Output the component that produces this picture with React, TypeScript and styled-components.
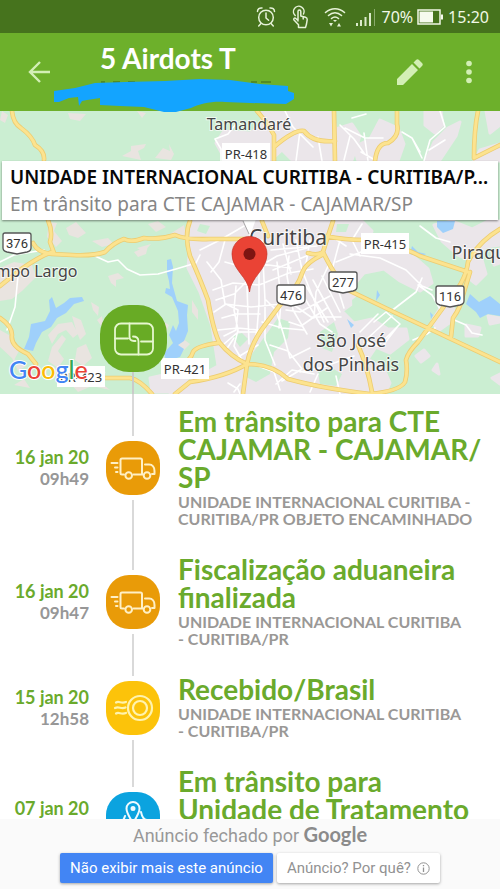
import React from "react";
import styled, { createGlobalStyle } from "styled-components";

const GlobalStyle = createGlobalStyle`
  *, *::before, *::after { box-sizing: border-box; }
  body { margin: 0; background: #fff; }
  h1, h2, p, ol { margin: 0; padding: 0; }
  button { border: 0; padding: 0; background: none; font: inherit; color: inherit; cursor: pointer; }
`;

const brandFont = `Lato, "Open Sans", sans-serif`;
const systemFont = `"Noto Sans", "Open Sans", sans-serif`;

const Page = styled.div`
  display: flex;
  flex-direction: column;
  height: 100vh;
  overflow: hidden;
  background: #fff;
  font-family: ${brandFont};
`;

const StatusBar = styled.div`
  flex: none;
  display: flex;
  align-items: center;
  justify-content: flex-end;
  height: 33px;
  padding-right: 11px;
  background: #46731d;
  color: #f1f8e6;
  font: 16px/32px ${systemFont};
  svg { display: block; flex: none; }
`;

const StatusIcons = styled.div`
  display: flex;
  align-items: center;
  gap: 15px;
  margin-right: 6px;
`;

const Battery = styled.div`
  display: flex;
  margin: 0 5px 0 4px;
`;

const AppBar = styled.header`
  flex: none;
  position: relative;
  z-index: 2;
  display: flex;
  align-items: center;
  height: 78px;
  padding: 0 16px 0 24px;
  background: #6db02b;
  color: #dcf0c6;
`;

const BarButton = styled.button`
  display: flex;
  align-items: center;
  justify-content: center;
  width: 30px;
  height: 40px;
`;

const BarTitle = styled.div`
  flex: 1;
  align-self: flex-start;
  padding: 10px 0 0 46px;
`;

const Heading = styled.h1`
  color: #fff;
  font-size: 28px;
  font-weight: 700;
  line-height: 30px;
`;

const BarActions = styled.div`
  display: flex;
  gap: 29px;
`;

const Scribble = styled.svg`
  position: absolute;
  left: 54px;
  top: 45px;
`;

const MapPanel = styled.section`
  flex: none;
  position: relative;
  height: 283px;
  background: #cbeed2;
`;

const MapDrawing = styled.svg`
  display: block;
  width: 100%;
  height: 100%;
`;

const InfoWindow = styled.div`
  position: absolute;
  top: 50px;
  left: 2px;
  right: 2px;
  padding: 3px 8px 2px;
  background: #fff;
  box-shadow: 0 1px 2px rgba(0, 0, 0, 0.45);
  font-family: ${systemFont};
  white-space: nowrap;
`;

const InfoTitle = styled.h2`
  color: #080808;
  font-size: 19px;
  font-weight: 600;
  line-height: 27px;
`;

const InfoText = styled.p`
  color: #858585;
  font-size: 19px;
  line-height: 27px;
`;

const MapToggle = styled.button`
  position: absolute;
  left: 100px;
  bottom: 22px;
  display: flex;
  align-items: center;
  justify-content: center;
  width: 67px;
  height: 67px;
  border-radius: 29px;
  background: #68ab25;
`;

const ToggleStem = styled.div`
  position: absolute;
  left: 132px;
  bottom: 0;
  width: 2px;
  height: 22px;
  background: #c9cbc9;
`;

const Timeline = styled.ol`
  flex: 1 1 0;
  min-height: 0;
  overflow: hidden;
  list-style: none;
`;

const Row = styled.li<{ $tall?: boolean }>`
  display: grid;
  grid-template-columns: 89px 88px 1fr;
  min-height: ${(p) => (p.$tall ? 130 : 92)}px;
`;

const When = styled.div`
  align-self: center;
  min-height: 42px;
  text-align: right;
  font-size: 17px;
  font-weight: 700;
  line-height: 21px;
  color: #979797;
`;

const Day = styled.div`
  color: #6aaa2c;
  font-size: 18px;
`;

const Track = styled.div`
  display: flex;
  flex-direction: column;
  align-items: center;
  gap: 5px;
`;

const Stem = styled.div`
  flex: 1;
  width: 2px;
  background: #d9d9d9;
`;

const Marker = styled.div<{ $color: string }>`
  flex: none;
  display: flex;
  align-items: center;
  justify-content: center;
  width: 54px;
  height: 54px;
  border-radius: 23px;
  background: ${(p) => p.$color};
`;

const Details = styled.div`
  padding: 13px 16px 15px 1px;
`;

const EventTitle = styled.h2`
  color: #6aaa2c;
  font-size: 28px;
  font-weight: 700;
  line-height: 28px;
`;

const EventText = styled.p`
  padding-top: 2px;
  color: #9a9896;
  font-size: 16px;
  font-weight: 700;
  line-height: 17px;
`;

const AdBar = styled.footer`
  flex: none;
  padding-bottom: 6px;
  background: #fafafa;
  font-family: Roboto, sans-serif;
`;

const AdCaption = styled.p`
  color: #989898;
  font-size: 18px;
  line-height: 31px;
  text-align: center;
`;

const AdBrand = styled.span`
  color: #8b8b8b;
  font-family: ${brandFont};
  font-size: 20px;
  font-weight: 700;
`;

const AdButtons = styled.div`
  display: flex;
  justify-content: center;
  gap: 4px;
  padding-top: 2px;
`;

const AdButton = styled.button<{ $primary?: boolean }>`
  display: flex;
  align-items: center;
  gap: 6px;
  height: 30px;
  padding: 0 10px;
  border-radius: 2px;
  background: ${(p) => (p.$primary ? "#4285f4" : "#fff")};
  color: ${(p) => (p.$primary ? "#fff" : "#929292")};
  font-size: 15px;
  box-shadow: 0 1px 3px rgba(0, 0, 0, 0.35);
  white-space: nowrap;
`;

const line = { fill: "none", strokeLinecap: "round", strokeLinejoin: "round" } as const;

const AlarmIcon = () => (
  <svg width="20" height="22" viewBox="0 0 20 22" stroke="#e6f2d8" strokeWidth="1.5" {...line}>
    <circle cx="10" cy="11.5" r="7.3" />
    <path d="M10 7v5l2.6 2.2M1.5 5.5C1.5 3 3.5 1.7 6 2M18.5 5.5C18.5 3 16.5 1.7 14 2M5 17.500l-2.300 2.500M15 17.500l2.300 2.500" />
  </svg>
);

const TouchIcon = () => (
  <svg width="18" height="24" viewBox="0 0 18 24" stroke="#e6f2d8" strokeWidth="1.5" {...line}>
    <path d="M4.200 10.500A5.300 5.300 0 1 1 12.500 9" />
    <path d="M7 16V6.500a1.400 1.400 0 0 1 2.800 0V11l4.700 1.300c1.300.4 1.800 1 1.700 2.300l-.7 4.400-1 3.500H7.500v-2.700L3 15c-1-1.600.7-2.500 1.800-1.500L7 15.500M12.200 12v2" />
  </svg>
);

const WifiIcon = () => (
  <svg width="22" height="22" viewBox="0 0 22 22" stroke="#e6f2d8" strokeWidth="1.6" {...line}>
    <path d="M1.500 6.500c5.500-5 13.500-5 19 0M4.500 9.500c4-3.500 9-3.500 13 0M7.500 12.500c2.200-1.900 4.800-1.900 7 0" />
    <path d="M9 14h4l-2 2zM5 17h4l-2 3.500zM13 20.500h4L15 17z" fill="#e6f2d8" stroke="none" />
  </svg>
);

const SignalIcon = () => (
  <svg width="20" height="18" viewBox="0 0 20 18" fill="#dcebcb">
    <path d="M0 15h2v3H0zM4 12h2v6H4zM8.500 9h2v9h-2zM13 5h2v13h-2z" />
    <path d="M18 1h1v17h-1z" opacity=".45" />
  </svg>
);

const BatteryIcon = () => (
  <svg width="26" height="16" viewBox="0 0 26 16">
    <path d="M1 1h22v14H1z" fill="none" stroke="#f1f8e6" strokeWidth="1.5" />
    <path d="M2.500 2.500H16v11H2.500zM24 5.500h2v5h-2z" fill="#f6faee" />
  </svg>
);

const TruckIcon = () => (
  <svg width="46" height="26" viewBox="0 0 46 26" stroke="#fff0c5" strokeWidth="2" {...line}>
    <path d="M14 19.500h-2a1.500 1.500 0 0 1-1.500-1.500V5A1.500 1.500 0 0 1 12 3.500h18.500A1.500 1.500 0 0 1 32 5v14.500H23.500M35 9.500h4c3.500 0 5.500 3 5.500 6.500v3h-2.500M32 19.500h1" />
    <circle cx="18.700" cy="20.500" r="3.300" />
    <circle cx="37" cy="20.500" r="3.300" />
    <path d="M1.500 8h6M5 12.500h2.500M6 17h1.500" />
  </svg>
);

const StampIcon = () => (
  <svg width="42" height="28" viewBox="0 0 42 28" stroke="#fff3ae" strokeWidth="2.2" {...line}>
    <circle cx="28" cy="14" r="12" />
    <circle cx="28" cy="14" r="7" />
    <path d="M4 8.500c3-2 5 1.500 10-.5M3 14c4-2 6 1.500 10.500-.5M4 19.500c3-2 5 1.500 10-.5" />
  </svg>
);

const PlaceIcon = () => (
  <svg width="32" height="38" viewBox="0 0 32 38" stroke="#eefaff" strokeWidth="2" {...line}>
    <path d="M16 23C13 18 9.500 13 9.500 8.500a6.500 6.500 0 0 1 13 0C22.500 13 19 18 16 23z" />
    <circle cx="16" cy="8.500" r="1.500" fill="#eefaff" />
    <path d="M8 16c-1 3-2 6-6 8v9l9-4 10 4 9-4v-9c-3 0-5-3-6-8" />
  </svg>
);

const FoldedMapIcon = () => (
  <svg width="40" height="34" viewBox="0 0 40 34" stroke="#e6f7cf" strokeWidth="1.8" {...line}>
    <rect x="1" y="1.500" width="38" height="31" rx="6" />
    <path d="M15.500 1.500v13q0 4.500 4.500 4.500h1.500M1 16.500h13M19 14.500q5.500 0 5.500 5v13M27 19.500h12" />
  </svg>
);

const InfoIcon = () => (
  <svg width="13" height="13" viewBox="0 0 13 13" stroke="#929292" fill="none">
    <circle cx="6.500" cy="6.500" r="5.700" />
    <path d="M6.500 5.500V10M6.500 3v1.200" strokeWidth="1.3" />
  </svg>
);

const suburbs = [
  "M0 268l14-6 18 3 4 12-14 14-10 8-12 2zM68 113l18 1-6 7-10-2zM2 111l6 4-3 8-5-3z",
  "M122 156l9-5 0-5 15-2-2 4-6 3 3 9zM155 158l8-10 7 3-1-7 5 10-3 6zM137 111l9 2-4 5z",
  "M66 228l10-6 10 11-8 5-9-3zM92 241l16-3 6 6-12 3zM134 252l14-6-2 8-8 3z",
  "M49 222l8 1-3 8 8 10-6 6-9-10zM148 224l10-3 8 6-10 5zM170 234l8 4 8-3-2-10z",
  "M108 276l10-3 6 5-8 2 0 7-5-4zM137 248l14-4-7 8z",
  "M48 335l10-11 14-2 6 12-5 4-7-8-8 4-6 10zM62 335l4 4-8 12 6 8-6 9-10-7 4-14z",
  "M77 348l9-4 6 14-9 8-8-6zM91 302l8 5-1 9-5-6zM0 330l9 5 10 16-5 9-14-13z",
  "M72 316l9 4 5 14-6 6-4-10zM97 320l5-4 2 14zM60 372l14-6 18 8 14-2-6 10 10 8-18-4-14 6zM12 358l14 8-8 5zM14 385l10-6 6 9z",
  "M172 348l10-10 8 6-8 8zM164 322l5 3-3 8zM192 300l6 10 0 10-6-8z",
];

const urban = [
  "M262 111h70l4 18 16-5 8 12-8 24h-60l-10-10-12 11h-44l-10-18 8-12 26 2 12-8z",
  "M380 120l18 8 6 16-6 17h-40l-4-14 16-8zM425 111l16 0 2 14-8 8-10-8zM486 111h14v14l-10 8z",
  "M448 128l12-6-4 14-16 24h-14l8-18zM480 150l20-6v17h-26z",
  "M192 221h170l10 10-4 14 22 8 22 2 16 14 4 14-12 8-20-10-16-12-20 4-12 14 4 14-14 10 12 12 18-4 16 10 18 0 2 10-18 14-14-6-8 12 16 10 6 14-6 13H168l24-16 26-14-6-40-12-34-12-24z",
  "M150 378l18-4 20 4-10 14h-26zM434 225l18-4 20 8 16-8h12v24l-14 2-14 14-14-6-16-14z",
  "M468 262l14-2 4 14-10 10-10-8zM442 305l12 4-2 12-14 10-6-10zM492 252l8-3v14l-6 2zM466 325l14 3-2 8-12 0zM416 356l8-6 5 6-8 6zM433 370l4-6 2 10z",
  "M488 316l12 2v4l-10 2zM492 378l8-4v10z",
];

const parks = [
  "M284 178l14-10 8 17-8 14zM337 224l12 0-3 8-10 0zM405 300l12 6-4 16-10-4z",
  "M268 332l10-14 12 4-2 16-14 14-4 22-14 8-12-6 8-22zM352 300l10-8 3 14-12 10zM232 336l10-3 6 6-8 8z",
  "M320 332l14-10 4 12-6 18-10-4zM370 276l14-1 8 8 20 6-5 12-16 4-16-6-12-12z",
  "M200 224l10 2-4 8-9-3zM372 242l10 2-4 7zM318 372l14-4 10 6-6 12-16-2z",
];

const streets = [
  "M95 256l13 6 10-2 9 9 13 6 18-1 18-5 20-6 4-8M0 262l14-7 30-5M7 330l8-23 3-31",
  "M207 262l14 18 4 24 26 3 40-4 20 14 30 0M213 290l20-7 26 2 30-12 24-4M225 240l-6 22-8 10",
  "M200 250l20-10 24-14M259 240l0 64-2 26-4 20M262 240l3 60 0 40 10 25M225 262l18 5 18-3 30 4",
  "M216 300l18-6 14-14M214 312l12-8 12 6-2 20-12 6M222 318l14-4 24 0M218 330l20-2 20 2M224 344l14-12 22 0",
  "M236 286l-2 24 4 20-4 16 8 14M247 286l2 58M258 345l-20 12M226 350l8-12",
  "M277 262l4 38-2 28M289 256l-2 20 6 34 14 24M267 262l10-6 30-8 16-14M273 270l38-16M271 250l46-4",
  "M283 244l8 30M296 240l6 30 12 30 10 22M310 240l-4 24M330 262l-14 30-2 26M340 240l-8 30 12 38",
  "M300 290l20 34 12 8M306 286l22 36M313 280l22 40M322 276l18 36M330 296l-30 16-14-2M327 308l-26 18-12-4",
  "M266 300l10 10 8 26 6 22M262 322l20 6 22 2M270 345l18 6 14 18-20 12M258 366l16 6 6 18M290 358l20-10",
  "M336 262l30-12 10-4M350 254l30 4 26 12 16 16 10 4M346 246l-12-8M362 224l-10 16 8 16",
  "M374 322l12-10 14 12-22 22-14-4M360 332l18-18M368 338l24-22M384 344l14-18M390 312l26-20 6-14",
  "M418 285l14 10 8 14M413 340l14-6 8-6M452 319l14 6 6 8 10 2M490 235l-14 13M420 226l16 12 14 4",
  "M300 372l20-4 34-12M276 384l16-14 22 4M310 392l8-18M340 394l-4-18",
  "M215 139l13-5 8-10M215 139l6 10 0 12M285 111l8 16 20 20M300 131l-4 30M318 137l4 24M340 125l14 14 10 14",
  "M345 128l20 10 18 0M350 136l-6 24M364 133l4 28M352 118l14-4M440 111l5 16-15 13-6 21M402 132l10 6 8 14M445 140l-16 10M422 158l-10-20M375 160l-14-8",
  "M228 383l10 6 2 5M234 392l6-8",
];

const highways = [
  "M12 111Q13 123 21 128Q32 136 35 145Q45 151 44 160M48 220Q53 232 50 242L54 253",
  "M33 243Q38 253 52 254L72 255Q95 256 105 252Q113 243 124 239Q131 243 144 238Q160 240 175 235Q186 240 210 239H245",
  "M52 252Q40 256 20 270L0 286",
  "M190 221Q184 235 190 256Q201 281 208 300Q213 329 219 342Q231 357 247 364Q272 364 288 379Q320 388 370 394Q400 391 405 382Q408 372 406 360Q408 352 418 342L445 305Q466 282 468 262Q478 242 500 229",
  "M247 364Q225 377 190 382L175 394M218 343Q196 346 193 352Q191 360 180 366M247 364L243 394",
  "M247 364Q251 343 265 325L280 305Q297 290 303 271Q306 263 322 255",
  "M0 318Q12 326 12 335Q10 346 28 354L36 364M95 378H130Q140 380 152 394",
  "M308 253Q318 256 323 252Q337 281 350 291Q375 303 400 315Q440 334 500 362",
  "M325 236Q345 240 365 240Q400 245 420 256L468 272",
  "M274 161V135Q267 122 257 111M274 147Q295 129 304 131Q313 143 335 141M334 111L335 161",
  "M397 111V124Q400 136 388 143Q377 143 375 161M478 111Q474 130 474 158M474 158L500 145",
  "M470 272L463 295Q461 307 453 318L451 337M333 221L328 236L323 252M262 221L268 236",
  "M358 345Q367 365 372 392",
];

const waters = [
  "M24 349l5-12 2-13 14-3 5-10-1-11 3-3 4 11 8-5 6-5 12-1 2 4-10 3-8 9-9 5-6 9-9 5-6 11-3 8z",
  "M167 260l4-1 2 8-1 16 5 18 11 4-1 10 1 16-4 10-6 4 6 4-4 8-14 4-2-8 9-10-4-8 4-10 3 6 3-8-1-12-6-14-7-4 1-5 4 1-1-8-2-8z",
  "M437 221h18l-2 8-10 4-6-6zM466 304l4-10 9 8 11-6 10 8v12l-12-2-8 4-4-6z",
  "M377 290l3 5-4 6zM347 319l7 6-3 3zM412 246l6 6 8 2-6 3-10-3zM430 312l3 3-2 4z",
];

const shields = [
  { x: 17, y: 243, label: "376" },
  { x: 291, y: 295, label: "476" },
  { x: 343, y: 282, label: "277" },
  { x: 450, y: 296, label: "116" },
];

const tags = [
  { x: 246, y: 154, label: "PR-418" },
  { x: 385, y: 244, label: "PR-415" },
  { x: 185, y: 369, label: "PR-421" },
  { x: 81, y: 377, label: "PR-423" },
];

const towns = [
  { x: 249, y: 130, size: 16, label: "Tamandaré" },
  { x: 288, y: 245, size: 21, label: "Curitiba" },
  { x: 32, y: 277, size: 16, label: "ampo Largo" },
  { x: 484, y: 259, size: 18, label: "Piraqua" },
  { x: 351, y: 347, size: 18, label: "São José" },
  { x: 351, y: 371, size: 18, label: "dos Pinhais" },
];

const logoLetters = [
  ["G", "#4285f4"],
  ["o", "#ea4335"],
  ["o", "#fbbc05"],
  ["g", "#4285f4"],
  ["l", "#34a853"],
  ["e", "#ea4335"],
];

const CityMap = () => (
  <MapDrawing viewBox="0 111 500 283" preserveAspectRatio="xMidYMid slice" role="img" aria-label="Mapa de Curitiba">
    <rect y="111" width="500" height="283" fill="#cbeed2" />
    <path d={suburbs.join("")} fill="#e9e4e0" />
    <path d={urban.join("")} fill="#ebe6ea" stroke="#ebe6ea" strokeWidth="3" strokeLinejoin="round" />
    <path d={parks.join("")} fill="#cbeed2" />
    <path d={waters.join("")} fill="#9fd0fb" />
    <path d={streets.join("")} stroke="#fff" strokeWidth="1.6" {...line} />
    <path d={highways.join("")} stroke="#edcc70" strokeWidth="4.6" {...line} />
    <path d={highways.join("")} stroke="#fce38f" strokeWidth="3" {...line} />
    {tags.map((t) => (
      <g key={t.label}>
        <rect x={t.x - 24} y={t.y - 11} width="48" height="21" fill="#fff" />
        <text x={t.x} y={t.y + 5} textAnchor="middle" fontFamily="Noto Sans" fontSize="13" fill="#333">{t.label}</text>
      </g>
    ))}
    {shields.map((s) => (
      <g key={s.label}>
        <path
          d={`M${s.x - 14} ${s.y - 8}q0-2 2-2h24q2 0 2 2v13q0 3-4 4l-10 2-10-2q-4-1-4-4z`}
          fill="#fff"
          stroke="#555"
          strokeWidth="1.3"
        />
        <text x={s.x} y={s.y + 5} textAnchor="middle" fontFamily="Roboto" fontSize="13" fill="#333">{s.label}</text>
      </g>
    ))}
    {towns.map((t) => (
      <text
        key={t.label}
        x={t.x}
        y={t.y}
        textAnchor="middle"
        fontFamily="Noto Sans"
        fontSize={t.size}
        fill="#454545"
        stroke="#fff"
        strokeWidth="2"
        strokeOpacity=".7"
        paintOrder="stroke"
      >
        {t.label}
      </text>
    ))}
    <path d="M243 219l7 17 6-17z" fill="#fff" />
    <path d="M243 221l6 13" stroke="#999" strokeWidth=".8" />
    <path d="M249.500 292c-1-15-17.500-22-17.500-38a17.500 17.500 0 0 1 35 0c0 16-16.500 23-17.500 38z" fill="#ea4335" stroke="#c5352a" strokeWidth=".7" />
    <circle cx="249.500" cy="254" r="6" fill="#7e1512" />
    <text x="9" y="379" fontFamily="Lato" fontSize="25" strokeWidth="2" paintOrder="stroke" stroke="#fff" fontWeight="500">
      {logoLetters.map(([letter, color], i) => (
        <tspan key={i} fill={color}>{letter}</tspan>
      ))}
    </text>
  </MapDrawing>
);

type TrackingEvent = {
  day: string;
  hour?: string;
  color: string;
  icon: React.ReactNode;
  title: string[];
  text?: string[];
};

const events: TrackingEvent[] = [
  {
    day: "16 jan 20",
    hour: "09h49",
    color: "#e99b08",
    icon: <TruckIcon />,
    title: ["Em trânsito para CTE", "CAJAMAR - CAJAMAR/", "SP"],
    text: ["UNIDADE INTERNACIONAL CURITIBA -", "CURITIBA/PR OBJETO ENCAMINHADO"],
  },
  {
    day: "16 jan 20",
    hour: "09h47",
    color: "#e99b08",
    icon: <TruckIcon />,
    title: ["Fiscalização aduaneira", "finalizada"],
    text: ["UNIDADE INTERNACIONAL CURITIBA", "- CURITIBA/PR"],
  },
  {
    day: "15 jan 20",
    hour: "12h58",
    color: "#fcc30a",
    icon: <StampIcon />,
    title: ["Recebido/Brasil"],
    text: ["UNIDADE INTERNACIONAL CURITIBA", "- CURITIBA/PR"],
  },
  {
    day: "07 jan 20",
    color: "#0ba3df",
    icon: <PlaceIcon />,
    title: ["Em trânsito para", "Unidade de Tratamento"],
  },
];

const Lines = ({ items }: { items: string[] }) => (
  <>
    {items.map((item, i) => (
      <React.Fragment key={item}>
        {i > 0 && <br />}
        {item}
      </React.Fragment>
    ))}
  </>
);

export default function App() {
  return (
    <Page>
      <GlobalStyle />
      <StatusBar>
        <StatusIcons>
          <AlarmIcon />
          <TouchIcon />
          <WifiIcon />
        </StatusIcons>
        <Battery><SignalIcon /></Battery>
        <span>70%</span>
        <Battery><BatteryIcon /></Battery>
        <span>15:20</span>
      </StatusBar>

      <AppBar>
        <BarButton aria-label="Voltar">
          <svg width="22" height="22" viewBox="0 0 22 22" stroke="#d3efb5" strokeWidth="2.4" fill="none">
            <path d="M12 1L2 11l10 10M2 11h20" />
          </svg>
        </BarButton>
        <BarTitle>
          <Heading>5 Airdots T</Heading>
        </BarTitle>
        <BarActions>
          <BarButton aria-label="Editar">
            <svg width="26" height="26" viewBox="0 0 26 26" fill="#d3efb5">
              <path d="M0 26v-6L15 5l6 6L6 26zM16.500 3.500L19 1q1.500-1.500 3 0l3 3q1.500 1.500 0 3l-2.500 2.500z" />
            </svg>
          </BarButton>
          <BarButton aria-label="Mais opções">
            <svg width="6" height="24" viewBox="0 0 6 24" fill="#d3efb5">
              <circle cx="3" cy="3.500" r="2.800" />
              <circle cx="3" cy="12" r="2.800" />
              <circle cx="3" cy="20.500" r="2.800" />
            </svg>
          </BarButton>
        </BarActions>
        <Scribble width="242" height="34" viewBox="54 78 242 34" aria-hidden="true">
          <path d="M101 82h4M113 82h7M128 82h7M251 82h6M261 82h10" stroke="#4c7f20" strokeWidth="1.5" />
          <path
            d="M54 91l21-3 20-5 30-1 40-1 35-2 30 1 30 4 28 2v5l6 2v6l-8 5-36-1-25-1c-13-1-26 2-34 6l-15 4h-12l-20-5-24-1-20-1v-7l-13 2-5 1-3 5-1-9-9 1-10 4-5 0z"
            fill="#13a4ff"
          />
        </Scribble>
      </AppBar>

      <MapPanel>
        <CityMap />
        <InfoWindow>
          <InfoTitle>UNIDADE INTERNACIONAL CURITIBA - CURITIBA/P…</InfoTitle>
          <InfoText>Em trânsito para CTE CAJAMAR - CAJAMAR/SP</InfoText>
        </InfoWindow>
        <ToggleStem />
        <MapToggle aria-label="Abrir mapa"><FoldedMapIcon /></MapToggle>
      </MapPanel>

      <Timeline>
        {events.map((event) => (
          <Row key={event.day + event.title[0]} $tall={!event.text}>
            <When>
              <Day>{event.day}</Day>
              {event.hour}
            </When>
            <Track>
              <Stem />
              <Marker $color={event.color}>{event.icon}</Marker>
              <Stem />
            </Track>
            <Details>
              <EventTitle><Lines items={event.title} /></EventTitle>
              {event.text && <EventText><Lines items={event.text} /></EventText>}
            </Details>
          </Row>
        ))}
      </Timeline>

      <AdBar>
        <AdCaption>Anúncio fechado por <AdBrand>Google</AdBrand></AdCaption>
        <AdButtons>
          <AdButton $primary>Não exibir mais este anúncio</AdButton>
          <AdButton>Anúncio? Por quê? <InfoIcon /></AdButton>
        </AdButtons>
      </AdBar>
    </Page>
  );
}
